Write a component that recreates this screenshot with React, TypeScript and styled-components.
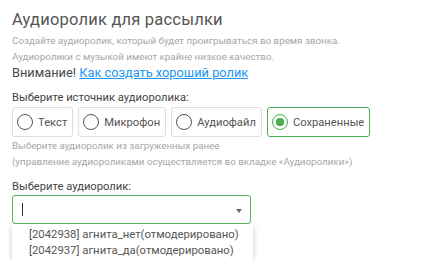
import React from 'react';
import styled, { createGlobalStyle } from 'styled-components';

const GlobalStyle = createGlobalStyle`
  html, body {
    margin: 0;
    padding: 0;
    background: #ffffff;
    font-family: Roboto, "Liberation Sans", sans-serif;
  }
`;

const sources = ['Текст', 'Микрофон', 'Аудиофайл', 'Сохраненные'];
const records = [
  '[2042938] агнита_нет(отмодерировано)',
  '[2042937] агнита_да(отмодерировано)',
];

function App() {
  const [source, setSource] = React.useState('Сохраненные');

  return (
    <Page>
      <GlobalStyle />
      <Title>Аудиоролик для рассылки</Title>
      <Hint>Создайте аудиоролик, который будет проигрываться во время звонка.</Hint>
      <Hint>Аудиоролики с музыкой имеют крайне низкое качество.</Hint>
      <Warning>
        Внимание! <Link href='#'>Как создать хороший ролик</Link>
      </Warning>

      <Label>Выберите источник аудиоролика:</Label>
      <Options>
        {sources.map(function (name) {
          const active = name === source;
          return (
            <Option key={name} $active={active} onClick={() => setSource(name)}>
              <Radio $active={active} />
              {name}
            </Option>
          );
        })}
      </Options>
      <Hint>Выберите аудиоролик из загруженных ранее</Hint>
      <Hint>(управление аудиороликами осуществляется во вкладке «Аудиоролики»)</Hint>

      <Label>Выберите аудиоролик:</Label>
      <SelectWrap>
        <Select>
          <Caret />
          <Arrow />
        </Select>
        <Menu>
          {records.map(function (r) {
            return <MenuItem key={r}>{r}</MenuItem>;
          })}
        </Menu>
      </SelectWrap>
    </Page>
  );
}

export default App;

const Page = styled.div({
  padding: '10px 12px 0',
  height: 260,
  boxSizing: 'border-box',
  overflow: 'hidden',
});

const Title = styled.div({
  fontSize: 16.5,
  letterSpacing: 0.2,
  lineHeight: '20px',
  color: '#555555',
  marginBottom: 3,
});

const Hint = styled.div({
  fontSize: 9.8,
  lineHeight: '16px',
  color: '#a6a6a6',
});

const Warning = styled.div({
  fontSize: 12.8,
  lineHeight: '16px',
  color: '#484848',
});

const Link = styled.a({
  color: '#2196f3',
  textDecoration: 'underline',
});

const Label = styled.div({
  marginTop: 9,
  fontSize: 11.2,
  lineHeight: '16px',
  color: '#444444',
});

const Options = styled.div({
  display: 'flex',
  gap: 5,
  margin: '1px 0 1px',
});

const Option = styled.div<{ $active: boolean }>((p) => ({
  display: 'flex',
  alignItems: 'center',
  gap: 5,
  height: 30,
  padding: '0 5px 0 4px',
  boxSizing: 'border-box',
  border: p.$active ? '1px solid #4caf50' : '1px solid #dddddd',
  borderRadius: 3,
  fontSize: 11.2,
  color: '#555555',
  cursor: 'pointer',
}));

const Radio = styled.span<{ $active: boolean }>((p) => ({
  width: 16,
  height: 16,
  boxSizing: 'border-box',
  borderRadius: '50%',
  border: p.$active ? '1.5px solid #4caf50' : '1.5px solid #555555',
  background: p.$active ? 'radial-gradient(circle, #4caf50 0 4px, #ffffff 4.5px)' : '#ffffff',
}));

const SelectWrap = styled.div({
  position: 'relative',
  width: 239,
  marginTop: 0,
});

const Select = styled.div({
  height: 29,
  boxSizing: 'border-box',
  border: '1px solid #5cb85c',
  borderRadius: 3,
  display: 'flex',
  alignItems: 'center',
  padding: '0 8px 0 9px',
  justifyContent: 'space-between',
});

const Caret = styled.span({
  width: 1,
  height: 13,
  background: '#333333',
});

const Arrow = styled.span({
  width: 0,
  height: 0,
  borderLeft: '3px solid transparent',
  borderRight: '3px solid transparent',
  borderTop: '4px solid #666666',
  marginTop: 2,
});

const Menu = styled.div({
  position: 'absolute',
  top: 29,
  left: 0,
  width: 241,
  background: '#ffffff',
  boxShadow: '0 2px 6px rgba(0,0,0,0.2)',
  padding: '3px 0 2px',
});

const MenuItem = styled.div({
  padding: '0 17px',
  fontSize: 11.3,
  lineHeight: '16px',
  color: '#555555',
  whiteSpace: 'nowrap',
});
